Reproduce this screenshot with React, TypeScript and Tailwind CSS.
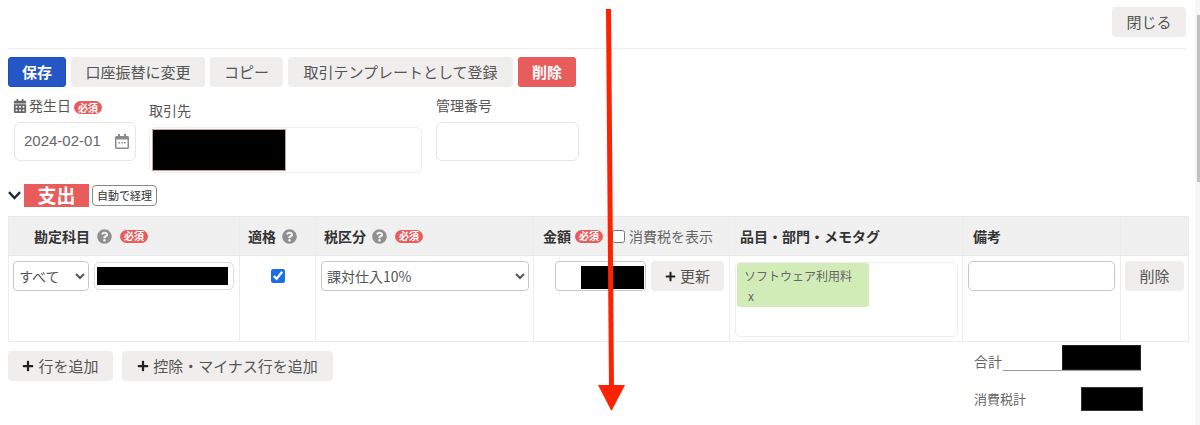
import React from "react";
import { FaCalendarAlt, FaPlus, FaQuestionCircle } from "react-icons/fa";

const btn = "h-[30px] rounded-[4px] bg-[#efeeec] text-[15px] text-[#555] flex items-center justify-center shrink-0";

function Req() {
  return (
    <span className="inline-flex items-center justify-center w-[28px] h-[13px] rounded-full bg-[#e85c5c] text-white text-[10px] font-bold leading-none">
      必須
    </span>
  );
}

function Help() {
  return <FaQuestionCircle size={15} className="text-[#8f8f8f] shrink-0" />;
}

function Cell({ w, className = "", children }: { w: string; className?: string; children?: React.ReactNode }) {
  return <div className={`${w} shrink-0 border-r border-[#ececec] last:border-r-0 ${className}`}>{children}</div>;
}

export default function App() {
  return (
    <div className="relative w-[1200px] h-[425px] overflow-hidden bg-white flex text-[#555] font-['Noto_Sans_CJK_JP','Liberation_Sans',sans-serif]">
      <div className="w-[1195px] shrink-0 pl-[8px] pt-[7px]">
        {/* top bar */}
        <div className="w-[1178px] h-[42px] border-b border-[#eeeeee] flex justify-end">
          <button className={`${btn} w-[74px]`}>閉じる</button>
        </div>

        {/* actions */}
        <div className="flex gap-[5px] mt-[8px]">
          <button className="h-[30px] w-[58px] rounded-[3px] bg-[#2457c5] border border-[#1f4db5] text-white text-[15px] font-bold flex items-center justify-center">保存</button>
          <button className={`${btn} w-[134px]`}>口座振替に変更</button>
          <button className={`${btn} w-[73px]`}>コピー</button>
          <button className={`${btn} w-[225px]`}>取引テンプレートとして登録</button>
          <button className="h-[30px] w-[58px] rounded-[3px] bg-[#e85c5c] text-white text-[15px] font-bold flex items-center justify-center">削除</button>
        </div>

        {/* fields */}
        <div className="flex mt-[8px] h-[88px]">
          <div className="w-[122px] ml-[6px] shrink-0">
            <div className="h-[21px] flex items-center text-[14px]">
              <FaCalendarAlt size={14} className="text-[#666] shrink-0 -ml-[1px] mt-[1px]" />
              <span className="ml-[2px] -mt-[1px]">発生日</span>
              <span className="ml-[3px] flex mt-[4px]"><Req /></span>
            </div>
            <div className="mt-[6px] h-[39px] border border-[#e9e6df] rounded-[6px] flex items-center justify-between pl-[9px] pr-[6px] text-[15px] text-[#666] font-['Liberation_Sans',sans-serif]">
              <span>2024-02-01</span>
              <svg width="14" height="15" viewBox="0 0 14 15" className="shrink-0">
                <path d="M3 0h2v2h4V0h2v2h1.5A1.5 1.5 0 0 1 14 3.5v10a1.5 1.5 0 0 1-1.5 1.5h-11A1.5 1.5 0 0 1 0 13.5v-10A1.5 1.5 0 0 1 1.5 2H3z" fill="#8a8a8a" />
                <rect x="1.5" y="5.5" width="11" height="8" fill="#fff" />
                <rect x="3.5" y="8" width="1.5" height="1.5" fill="#8a8a8a" />
                <rect x="6.25" y="8" width="1.5" height="1.5" fill="#8a8a8a" />
                <rect x="9" y="8" width="1.5" height="1.5" fill="#8a8a8a" />
              </svg>
            </div>
          </div>
          <div className="w-[273px] ml-[13px] shrink-0">
            <div className="h-[21px] flex items-center text-[14px] mt-[5px]">取引先</div>
            <div className="mt-[6px] h-[46px] border border-[#f0eeee] rounded-[6px] pl-[2px] py-[1px] flex">
              <div className="w-[134px] bg-black border-[1px] border-[#c9a0a0]" />
            </div>
          </div>
          <div className="w-[143px] ml-[14px] shrink-0">
            <div className="h-[21px] flex items-center text-[14px]">管理番号</div>
            <div className="mt-[6px] h-[39px] border border-[#e9e6df] rounded-[6px]" />
          </div>
        </div>

        {/* section */}
        <div className="flex items-center h-[24px]">
          <svg width="13" height="9" viewBox="0 0 13 9" className="shrink-0 mr-[3px]">
            <polyline points="1,1.2 6.5,7 12,1.2" fill="none" stroke="#1f2a38" strokeWidth="2.4" />
          </svg>
          <div className="w-[65px] h-[23px] bg-[#e85c5c] text-white text-[19px] font-bold flex items-center justify-center">支出</div>
          <div className="ml-[3px] w-[65px] h-[21px] border-[1.5px] border-[#888] rounded-[4px] bg-white text-[#333] text-[11px] flex items-center justify-center">自動で経理</div>
        </div>

        {/* table */}
        <div className="w-[1181px] mt-[9px] border-l border-r border-b border-[#ececec]">
          <div className="flex h-[40px] bg-[#f0f0f0] border-b border-t border-[#e8e8e8] text-[14px] font-bold text-[#333] items-stretch">
            <Cell w="w-[231px]" className="flex items-center pl-[25px]"><span>勘定科目</span><span className="ml-[7px]"><Help /></span><span className="ml-[8px] flex"><Req /></span></Cell>
            <Cell w="w-[76px]" className="flex items-center pl-[8px]"><span>適格</span><span className="ml-[6px]"><Help /></span></Cell>
            <Cell w="w-[218px]" className="flex items-center pl-[8px]"><span>税区分</span><span className="ml-[6px]"><Help /></span><span className="ml-[8px] flex"><Req /></span></Cell>
            <Cell w="w-[196px]" className="flex items-center pl-[9px]">
              <span>金額</span><span className="ml-[4px] flex"><Req /></span>
              <input type="checkbox" className="ml-[9px] w-[13px] h-[13px]" />
              <span className="ml-[4px] font-normal text-[#666]">消費税を表示</span>
            </Cell>
            <Cell w="w-[233px]" className="flex items-center pl-[10px]">品目・部門・メモタグ</Cell>
            <Cell w="w-[158px]" className="flex items-center pl-[10px]">備考</Cell>
            <Cell w="w-[67px]" />
          </div>
          <div className="flex h-[85px] text-[14px]">
            <Cell w="w-[231px]" className="flex gap-[5px] pl-[4px] pt-[5px] items-start">
              <select defaultValue="all" className="w-[76px] h-[30px] bg-white border border-[#c8c8c8] rounded-[4px] text-[14px] text-[#555] pl-[1px]">
                <option value="all">すべて</option>
              </select>
              <div className="w-[140px] h-[28px] border-[1.5px] border-[#ddd] rounded-[5px] pl-[2px] pr-[5px] py-[4px] mt-[1px] flex">
                <div className="w-full bg-black" />
              </div>
            </Cell>
            <Cell w="w-[76px]" className="flex justify-center pt-[13px]">
              <input type="checkbox" defaultChecked className="w-[14px] h-[14px] accent-[#1a6fe8]" />
            </Cell>
            <Cell w="w-[218px]" className="pl-[5px] pr-[5px] pt-[5px]">
              <select defaultValue="t" className="w-[208px] h-[30px] bg-white border border-[#c8c8c8] rounded-[4px] text-[14px] text-[#555] pl-[1px] block">
                <option value="t">課対仕入10%</option>
              </select>
            </Cell>
            <Cell w="w-[196px]" className="flex gap-[5px] pl-[21px] pt-[5px] items-start">
              <div className="w-[91px] h-[30px] border border-[#c8c8c8] rounded-[4px] pl-[25px] flex pt-[4px] pb-[1px] shrink-0">
                <div className="w-full bg-black mr-[1px]" />
              </div>
              <button className={`${btn} w-[73px] gap-[4px]`}><FaPlus size={11} className="text-[#222]" />更新</button>
            </Cell>
            <Cell w="w-[233px]" className="pl-[5px] pr-[4px] pt-[6px]">
              <div className="h-[75px] border border-[#eeeeee] rounded-[5px] pl-[1px]">
                <div className="w-[132px] h-[44px] rounded-[3px] bg-[#d2ecb8] text-[12px] leading-[20px] text-[#666] pl-[7px] pt-[3px]">
                  <div>ソフトウェア利用料</div>
                  <div className="pl-[4px]">x</div>
                </div>
              </div>
            </Cell>
            <Cell w="w-[158px]" className="pl-[5px] pt-[5px]">
              <input className="block w-[147px] h-[30px] border border-[#c8c8c8] rounded-[5px] bg-white" />
            </Cell>
            <Cell w="w-[67px]" className="pl-[4px] pt-[5px]">
              <button className={`${btn} w-[59px]`}>削除</button>
            </Cell>
          </div>
        </div>

        {/* footer */}
        <div className="flex w-[1181px]">
          <div className="flex gap-[9px] mt-[9px] items-start">
            <button className={`${btn} w-[105px] gap-[4px]`}><FaPlus size={12} className="text-[#222]" />行を追加</button>
            <button className={`${btn} w-[211px] gap-[4px]`}><FaPlus size={12} className="text-[#222]" />控除・マイナス行を追加</button>
          </div>
          <div className="ml-[641px] text-[#666] mt-[3px]">
            <div className="flex items-end w-[167px] h-[26px]">
              <span className="w-[29px] text-[14px] leading-[18px] mb-[1px]">合計</span>
              <div className="flex-1 flex justify-end border-b border-[#999] h-[26px]">
                <div className="w-[79px] bg-black border border-[#222]" />
              </div>
            </div>
            <div className="flex items-center w-[169px] h-[24px] mt-[16px] justify-between text-[13px]">
              <span>消費税計</span>
              <div className="w-[62px] h-[24px] bg-black border border-[#333]" />
            </div>
          </div>
        </div>
      </div>

      {/* scrollbar */}
      <div className="w-[5px] h-full bg-[#f6f6f6] flex flex-col items-end pt-[15px]">
        <div className="w-[3px] h-[167px] bg-[#c1c1c1]" />
      </div>

      {/* annotation arrow */}
      <svg className="absolute left-0 top-0 pointer-events-none" width="1200" height="425">
        <line x1="608.5" y1="9" x2="611.5" y2="388" stroke="#ff2200" strokeWidth="5" />
        <polygon points="598,385 625,385 611.5,411" fill="#ff2200" />
      </svg>
    </div>
  );
}
